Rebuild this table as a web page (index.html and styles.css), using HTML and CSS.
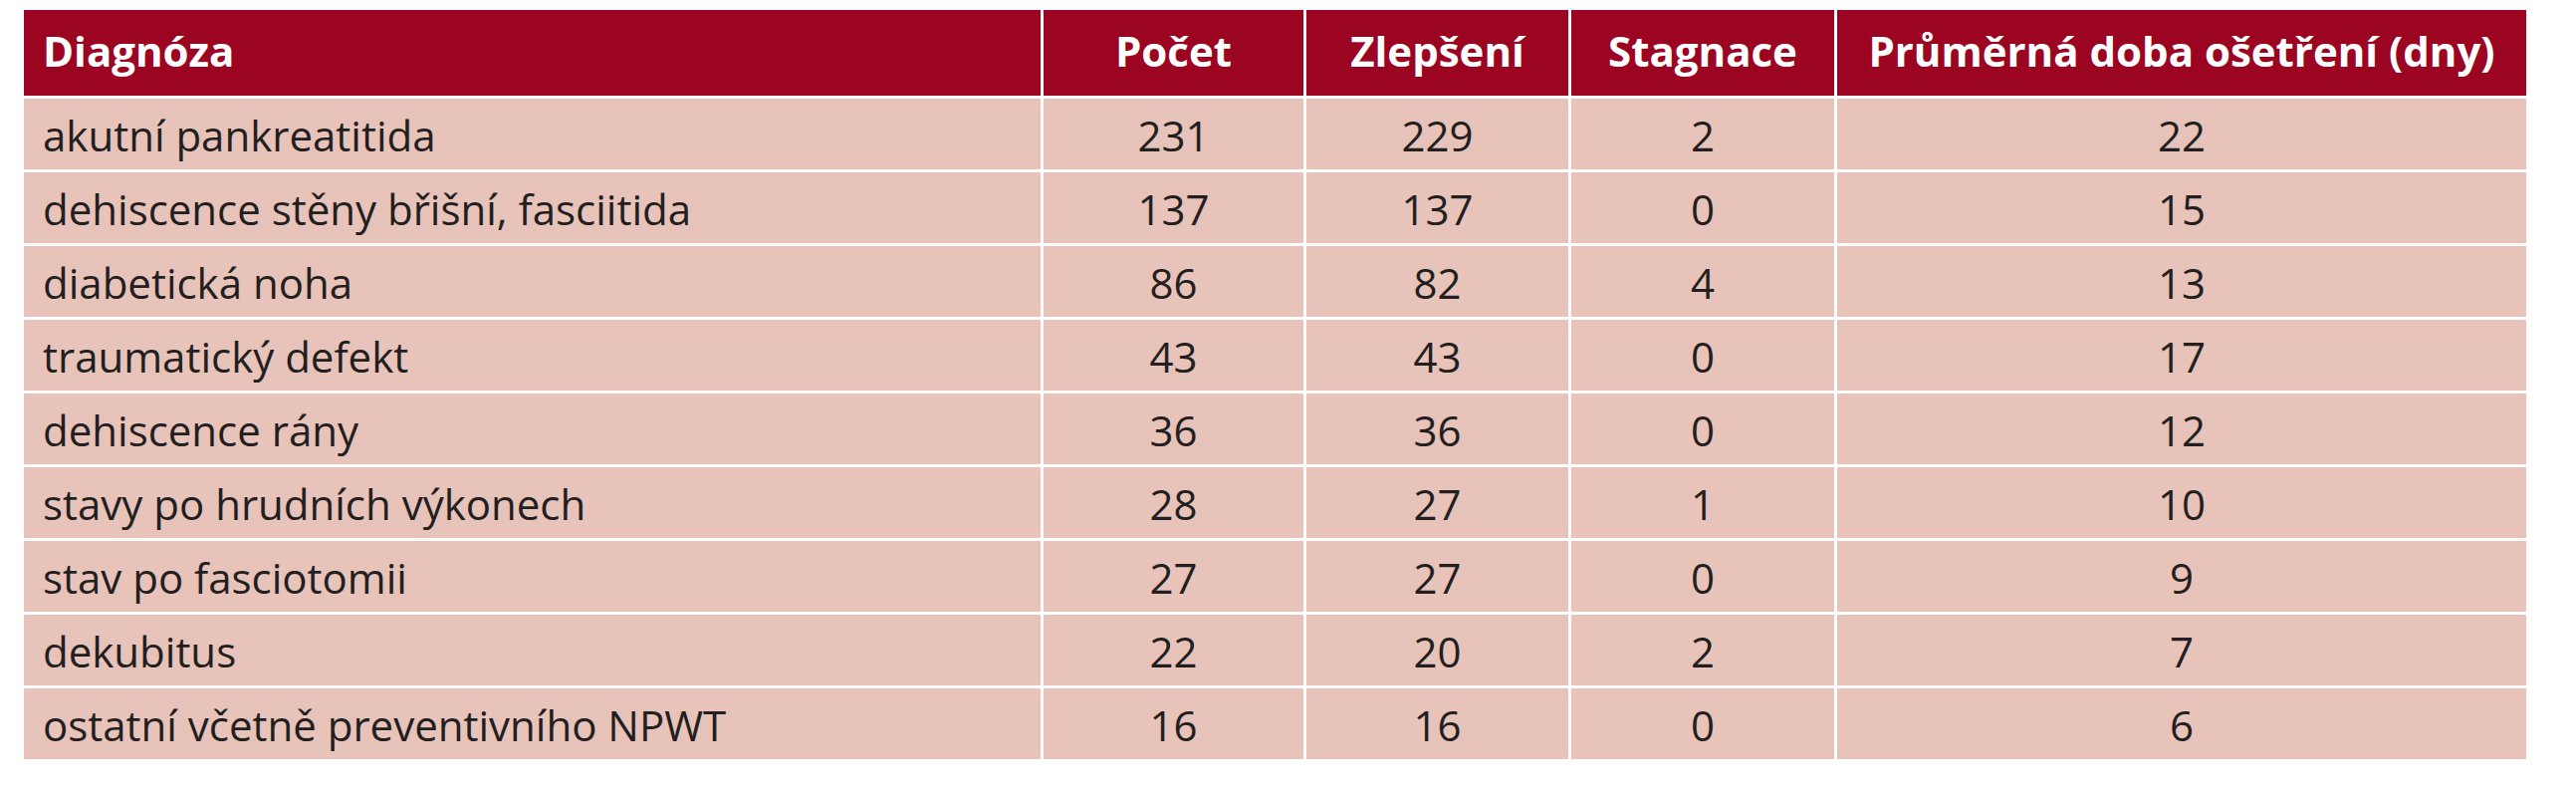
FILE: index.html
```html
<!DOCTYPE html>
<html lang="cs">
<head>
<meta charset="utf-8">
<title>Diagnózy</title>
<link rel="stylesheet" href="styles.css">
</head>
<body>
<table class="data">
  <thead>
    <tr>
      <th class="c-diag">Diagnóza</th>
      <th class="c-pocet">Počet</th>
      <th class="c-zlep">Zlepšení</th>
      <th class="c-stag">Stagnace</th>
      <th class="c-doba">Průměrná doba ošetření (dny)</th>
    </tr>
  </thead>
  <tbody>
    <tr><td>akutní pankreatitida</td><td>231</td><td>229</td><td>2</td><td>22</td></tr>
    <tr><td>dehiscence stěny břišní, fasciitida</td><td>137</td><td>137</td><td>0</td><td>15</td></tr>
    <tr><td>diabetická noha</td><td>86</td><td>82</td><td>4</td><td>13</td></tr>
    <tr><td>traumatický defekt</td><td>43</td><td>43</td><td>0</td><td>17</td></tr>
    <tr><td>dehiscence rány</td><td>36</td><td>36</td><td>0</td><td>12</td></tr>
    <tr><td>stavy po hrudních výkonech</td><td>28</td><td>27</td><td>1</td><td>10</td></tr>
    <tr><td>stav po fasciotomii</td><td>27</td><td>27</td><td>0</td><td>9</td></tr>
    <tr><td>dekubitus</td><td>22</td><td>20</td><td>2</td><td>7</td></tr>
    <tr><td>ostatní včetně preventivního NPWT</td><td>16</td><td>16</td><td>0</td><td>6</td></tr>
  </tbody>
</table>
</body>
</html>
```

FILE: styles.css
```css
html, body {
  margin: 0;
  padding: 0;
  background: #ffffff;
}

body {
  font-family: "Open Sans", "Noto Sans", "Liberation Sans", sans-serif;
  color: #231f20;
}

.data {
  margin: 7px 0 0 21px;
  border-collapse: separate;
  border-spacing: 3px;
  table-layout: fixed;
  width: 2519px;
}

.data th,
.data td {
  box-sizing: border-box;
  padding: 0;
  text-align: center;
  font-size: 42px;
  white-space: nowrap;
}

.data th {
  background: #9b0521;
  color: #ffffff;
  font-weight: 700;
  height: 86px;
  line-height: 82px;
  padding-bottom: 4px;
  vertical-align: top;
}

.data td {
  background: #e7c3ba;
  font-weight: 400;
  height: 71px;
  line-height: 69px;
  padding-top: 2px;
  vertical-align: top;
}

.data th:first-child,
.data td:first-child {
  text-align: left;
  padding-left: 19px;
}

.c-diag { width: 1021px; }
.c-pocet { width: 261px; }
.c-zlep { width: 263px; }
.c-stag { width: 264px; }
.c-doba { width: 692px; }
```
